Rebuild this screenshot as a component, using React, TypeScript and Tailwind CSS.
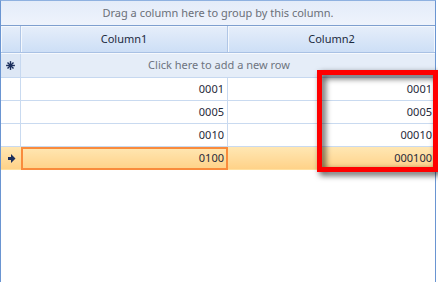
import React from "react";

const Star = () => (
  <svg width="9" height="9" viewBox="0 0 9 9" className="block">
    <g stroke="#1c2f5c" strokeWidth="1.4" strokeLinecap="square">
      <line x1="4.5" y1="0.8" x2="4.5" y2="8.2" />
      <line x1="0.8" y1="4.5" x2="8.2" y2="4.5" />
      <line x1="2" y1="2" x2="7" y2="7" />
      <line x1="7" y1="2" x2="2" y2="7" />
    </g>
  </svg>
);

const Arrow = () => (
  <svg width="8" height="9" viewBox="0 0 8 9" className="block ml-px">
    <path d="M0 3 H3 V0 L7.5 4.5 L3 9 V6 H0 Z" fill="#1c2f5c" />
  </svg>
);

const rows = [
  ["0001", "0001"],
  ["0005", "0005"],
  ["0010", "00010"],
  ["0100", "000100"],
];

export default function App() {
  return (
    <div
      className="relative w-[438px] h-[282px] bg-white overflow-hidden text-[11px]"
      style={{ fontFamily: '"Noto Sans", "Open Sans", sans-serif' }}
    >
      <div className="w-[436px] h-[282px] border-l border-r border-t border-l-[#6a95d2] border-r-[#6a95d2] border-t-[#8fb1e0] flex flex-col">
        {/* group panel */}
        <div className="h-[25px] shrink-0 border-b border-[#7e9fcf] bg-gradient-to-b from-[#e4ecf9] to-[#eef3fc] flex items-center justify-center pt-px text-[#6b6f78]">
          Drag a column here to group by this column.
        </div>
        {/* header */}
        <div className="h-[27px] shrink-0 flex border-b border-[#a9c1e4] bg-gradient-to-b from-[#e6eefa] to-[#cddff6] text-[#1b2a3e]">
          <div className="w-[20px] border-r border-[#b0c6e6] shadow-[inset_1px_1px_0_#f4f8fd]" />
          <div className="w-[207px] border-r border-[#b0c6e6] shadow-[inset_1px_1px_0_#f4f8fd] flex items-center justify-center">
            Column1
          </div>
          <div className="w-[207px] shadow-[inset_1px_1px_0_#f4f8fd,inset_-1px_0_0_#f4f8fd] flex items-center justify-center">
            Column2
          </div>
        </div>
        {/* new row */}
        <div className="h-[25px] shrink-0 flex border-b border-[#c6d8f0] border-t border-t-[#f6f9fd] bg-[#e5edf8] text-[#6d7480]">
          <div className="w-[20px] border-r border-[#c6d8f0] bg-[#dde7f5] flex items-center justify-center">
            <Star />
          </div>
          <div className="flex-1 flex items-center justify-center pr-[18px]">
            Click here to add a new row
          </div>
        </div>
        {/* data rows */}
        {rows.map((r, i) => {
          const sel = i === rows.length - 1;
          return (
            <div
              key={i}
              className={
                sel
                  ? "h-[23px] shrink-0 flex bg-gradient-to-b from-[#ffe7b3] to-[#ffd288] border-b border-[#ffe0a0] text-[#1f2a3a]"
                  : "h-[23px] shrink-0 flex border-b border-[#c9daf0] text-[#1f2a3a]"
              }
            >
              <div
                className={
                  sel
                    ? "w-[20px] flex items-center justify-center"
                    : "w-[20px] border-r border-[#c9daf0]"
                }
              >
                {sel && <Arrow />}
              </div>
              <div
                className={
                  sel
                    ? "w-[207px] border-2 border-[#f98b3c] -mb-px flex items-center justify-end pr-[2px]"
                    : "w-[207px] border-r border-[#c9daf0] flex items-center justify-end pr-[3px]"
                }
              >
                {r[0]}
              </div>
              <div className="w-[207px] flex items-center justify-end pr-[3px]">{r[1]}</div>
            </div>
          );
        })}
      </div>
      {/* annotation */}
      <div className="absolute left-[317px] top-[70px] w-[121px] h-[102px] border-[5px] border-[#ff0000] drop-shadow-[3px_3px_3px_rgba(0,0,0,0.75)]" />
    </div>
  );
}
